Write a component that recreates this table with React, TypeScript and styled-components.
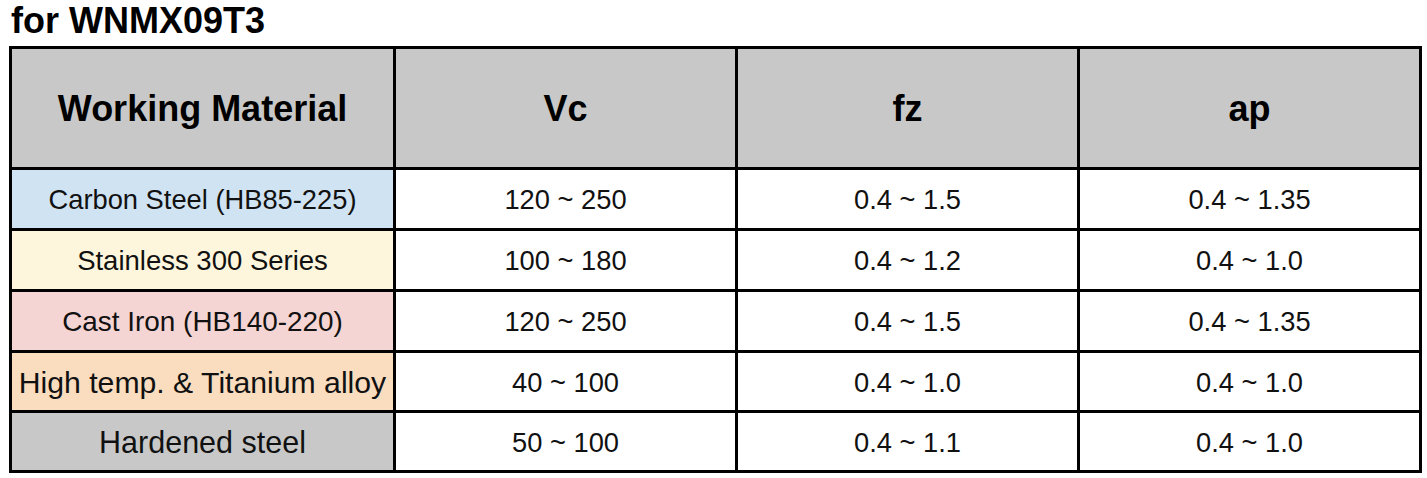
import styled, { createGlobalStyle } from 'styled-components';

const GlobalStyle = createGlobalStyle`
  body {
    margin: 0;
    background: #ffffff;
    font-family: "Liberation Sans", Arial, sans-serif;
  }
`;

const Page = styled.div`
  padding: 3px 0 0 9px;
`;

const Title = styled.h1`
  margin: 0 0 7px 2px;
  font-size: 36px;
  line-height: 36px;
  font-weight: bold;
  color: #000;
`;

const Grid = styled.div`
  display: grid;
  width: 1413px;
  box-sizing: border-box;
  grid-template-columns: 381px 339px 339px 339px;
  grid-template-rows: 118px 58px 58px 58px 57px 57px;
  gap: 3px;
  padding: 3px;
  background: #000;
`;

const HeadCell = styled.div`
  display: flex;
  align-items: center;
  justify-content: center;
  background: #c8c8c8;
  font-size: 36px;
  font-weight: bold;
  color: #000;
  padding-top: 2px;
`;

const Cell = styled.div<{ $bg?: string; $size?: number }>`
  display: flex;
  align-items: center;
  justify-content: center;
  background: ${(p) => p.$bg || '#ffffff'};
  font-size: ${(p) => p.$size || 27.3}px;
  color: #111;
  white-space: nowrap;
  padding-top: 2px;
`;

type Row = { name: string; bg: string; size: number; vc: string; fz: string; ap: string };

const rows: Row[] = [
  { name: 'Carbon Steel (HB85-225)', bg: '#d0e3f3', size: 27.3, vc: '120 ~ 250', fz: '0.4 ~ 1.5', ap: '0.4 ~ 1.35' },
  { name: 'Stainless 300 Series', bg: '#fef6dc', size: 27.5, vc: '100 ~ 180', fz: '0.4 ~ 1.2', ap: '0.4 ~ 1.0' },
  { name: 'Cast Iron (HB140-220)', bg: '#f4d5d3', size: 27.9, vc: '120 ~ 250', fz: '0.4 ~ 1.5', ap: '0.4 ~ 1.35' },
  { name: 'High temp. & Titanium alloy', bg: '#fadcbf', size: 30.2, vc: '40 ~ 100', fz: '0.4 ~ 1.0', ap: '0.4 ~ 1.0' },
  { name: 'Hardened steel', bg: '#c8c8c8', size: 30.5, vc: '50 ~ 100', fz: '0.4 ~ 1.1', ap: '0.4 ~ 1.0' },
];

export default function App() {
  return (
    <>
      <GlobalStyle />
      <Page>
        <Title>for WNMX09T3</Title>
        <Grid>
          <HeadCell>Working Material</HeadCell>
          <HeadCell>Vc</HeadCell>
          <HeadCell>fz</HeadCell>
          <HeadCell>ap</HeadCell>
          {rows.map((r) => (
            <>
              <Cell key={r.name} $bg={r.bg} $size={r.size}>{r.name}</Cell>
              <Cell>{r.vc}</Cell>
              <Cell>{r.fz}</Cell>
              <Cell>{r.ap}</Cell>
            </>
          ))}
        </Grid>
      </Page>
    </>
  );
}
